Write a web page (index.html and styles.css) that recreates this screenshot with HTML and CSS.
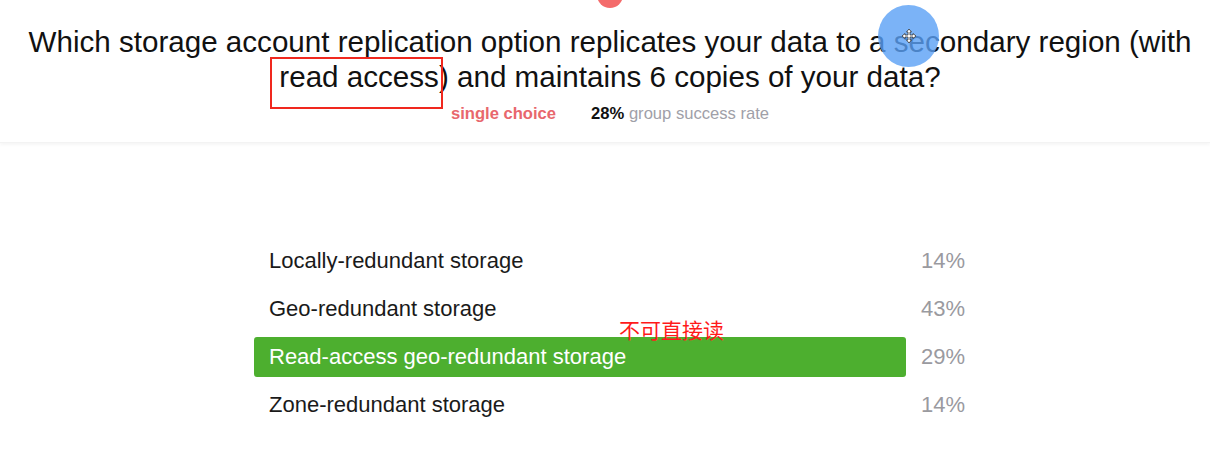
FILE: index.html
```html
<!DOCTYPE html>
<html>
<head>
<meta charset="utf-8">
<link rel="stylesheet" href="styles.css">
</head>
<body>
<div class="page">
  <header class="head">
    <h1 class="question">Which storage account replication option replicates your data to a secondary region (with<br>read access) and maintains 6 copies of your data?</h1>
    <div class="meta">
      <span class="kind">single choice</span>
      <span class="rate"><b>28%</b> group success rate</span>
    </div>
  </header>
  <section class="options">
    <div class="row"><div class="label">Locally-redundant storage</div><div class="pct">14%</div></div>
    <div class="row"><div class="label">Geo-redundant storage</div><div class="pct">43%</div></div>
    <div class="row correct"><div class="label">Read-access geo-redundant storage</div><div class="pct">29%</div></div>
    <div class="row"><div class="label">Zone-redundant storage</div><div class="pct">14%</div></div>
  </section>
  <div class="dot-red"></div>
  <div class="cursor-ring">
    <svg width="16" height="16" viewBox="0 0 16 16" class="move">
      <path d="M8 1 L10.5 4 H9 V7 H12 V5.5 L15 8 L12 10.5 V9 H9 V12 H10.5 L8 15 L5.5 12 H7 V9 H4 V10.5 L1 8 L4 5.5 V7 H7 V4 H5.5 Z" fill="#fff" stroke="#333" stroke-width="0.8"/>
    </svg>
  </div>
  <div class="mark-box"></div>
  <div class="note">不可直接读</div>
</div>
</body>
</html>
```
FILE: styles.css
```css
* { box-sizing: border-box; }
html, body { margin: 0; padding: 0; background: #fff; }
body { font-family: "Liberation Sans", Arial, sans-serif; color: #111; }
.page { position: relative; width: 1210px; height: 458px; overflow: hidden; }
.head {
  height: 143px;
  padding: 24px 0 0 10px;
  box-shadow: 0 2px 3px rgba(0,0,0,0.04);
  border-bottom: 1px solid #f3f3f3;
}
.question {
  margin: 0;
  font-weight: normal;
  font-size: 29.6px;
  line-height: 35px;
  text-align: center;
  white-space: nowrap;
  color: #111;
}
.meta {
  margin-top: 10px;
  display: flex;
  justify-content: center;
  gap: 35px;
  font-size: 16.6px;
  line-height: 20px;
}
.kind { color: #e8676d; font-weight: bold; }
.rate { color: #a0a0a8; }
.rate b { color: #111; }
.options {
  margin: 94px 0 0 254px;
  width: 711px;
}
.row {
  display: grid;
  grid-template-columns: 652px 1fr;
  height: 48px;
  align-items: center;
  font-size: 22px;
}
.label { padding-left: 15px; height: 40px; line-height: 40px; color: #1a1a1a; }
.pct { text-align: right; color: #9a9a9f; }
.correct .label { background: #4daf2f; color: #fff; border-radius: 3px; }
.dot-red {
  position: absolute; left: 597px; top: -18px;
  width: 26px; height: 26px; border-radius: 50%; background: #f46b6b;
}
.cursor-ring {
  position: absolute; left: 878px; top: 5px;
  width: 61px; height: 62px; border-radius: 50%;
  background: rgba(90, 160, 245, 0.8);
  display: flex; align-items: center; justify-content: center;
}
.mark-box {
  position: absolute; left: 270px; top: 57px;
  width: 173px; height: 52px;
  border: 2px solid #f0281e;
}
.note {
  position: absolute; left: 619px; top: 316px;
  font-family: "Noto Sans CJK SC", sans-serif;
  font-size: 21px; line-height: 26px; color: #ff1a1a;
}
```
